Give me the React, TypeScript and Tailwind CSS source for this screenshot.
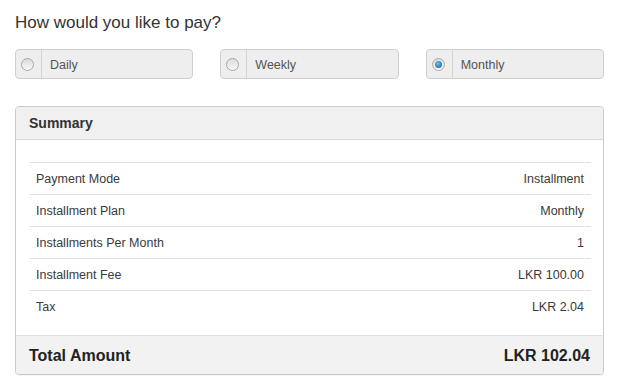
import { useState } from 'react'

const PLANS = ['Daily', 'Weekly', 'Monthly']

const ROWS: [string, string][] = [
  ['Payment Mode', 'Installment'],
  ['Installment Plan', 'Monthly'],
  ['Installments Per Month', '1'],
  ['Installment Fee', 'LKR 100.00'],
  ['Tax', 'LKR 2.04'],
]

function Radio({ checked }: { checked: boolean }) {
  return (
    <span className="flex h-[13px] w-[13px] items-center justify-center rounded-full border border-[#a9a9a9] bg-gradient-to-b from-[#dcdcdc] to-[#f8f8f8]">
      {checked && (
        <span className="h-[7px] w-[7px] rounded-full bg-[radial-gradient(circle_at_40%_35%,#6cc0f5,#0d5796)]" />
      )}
    </span>
  )
}

export default function App() {
  const [plan, setPlan] = useState('Monthly')

  return (
    <div className="h-[382px] w-[620px] bg-white px-[15px] font-['Liberation_Sans',Arial,sans-serif] text-[#333]">
      <h1 className="pt-[11px] text-[17px] leading-[24px] font-normal">How would you like to pay?</h1>

      {/* plan picker */}
      <div className="mt-[14px] grid w-[589px] grid-cols-3 gap-[27px]">
        {PLANS.map((p) => (
          <button
            key={p}
            onClick={() => setPlan(p)}
            className="flex h-[30px] items-stretch rounded-[4px] border border-[#cfcfcf] bg-[#eeeeee] text-left"
          >
            <span className="flex w-[26px] shrink-0 items-center border-r border-[#d2d2d2] pl-[5px] pt-[1px]">
              <Radio checked={plan === p} />
            </span>
            <span className="flex items-center pl-[8px] pt-[3px] text-[12.5px] text-[#555]">{p}</span>
          </button>
        ))}
      </div>

      {/* summary panel */}
      <div className="mt-[27px] w-[589px] overflow-hidden rounded-[4px] border border-[#c8ccd0] shadow-[0_1px_1px_rgba(0,0,0,0.05)]">
        <div className="flex h-[33px] items-center border-b border-[#d6d9dc] bg-[#f0f0f0] px-[13px] text-[14px] font-bold">
          Summary
        </div>
        <div className="pb-[13px] pl-[13px] pr-[12px] pt-[22px]">
          {ROWS.map(([label, value]) => (
            <div
              key={label}
              className="flex h-[32px] items-center justify-between border-t border-[#e1e1e1] px-[7px] pt-[2px] text-[12.5px] text-[#3a3a3a]"
            >
              <span>{label}</span>
              <span>{value}</span>
            </div>
          ))}
        </div>
        <div className="flex h-[39px] items-center justify-between border-t border-[#e1e1e1] bg-[#f2f2f2] px-[13px] pt-[1px] text-[16px] font-bold text-[#222]">
          <span>Total Amount</span>
          <span>LKR 102.04</span>
        </div>
      </div>
    </div>
  )
}
